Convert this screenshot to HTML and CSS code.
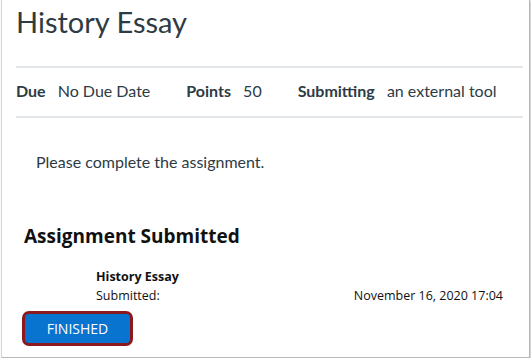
FILE: index.html
```html
<!DOCTYPE html>
<html>

<head>
  <title>History Essay</title>
  <link rel="stylesheet" href="styles.css">
</head>

<body>
  <div class="frame">
    <h1 class="title">History Essay</h1>
    <ul class="details">
      <li><b>Due</b> No Due Date</li>
      <li><b>Points</b> 50</li>
      <li><b>Submitting</b> an external tool</li>
    </ul>
    <p class="description">Please complete the assignment.</p>

    <div class="tool">
      <h2>Assignment Submitted</h2>
      <div class="submission">
        <div class="name">History Essay</div>
        <div class="row">
          <span>Submitted:</span>
          <span>November 16, 2020 17:04</span>
        </div>
      </div>
      <div class="finish">
        <button class="finish-button">FINISHED</button>
      </div>
    </div>
  </div>
</body>
</html>
```

FILE: styles.css
```css
html, body {
  margin: 0;
  padding: 0;
  background: #fff;
}

.frame {
  box-sizing: border-box;
  width: 529px;
  height: 358px;
  margin-left: 1px;
  border-left: 1px solid #d6d6d6;
  border-right: 1px solid #b8b8b8;
  border-bottom: 1px solid #b8b8b8;
  box-shadow: 1px 1px 2px rgba(0, 0, 0, 0.25);
  padding: 0 6px 0 14px;
  font-family: Lato, "Open Sans", sans-serif;
  color: #2d3b45;
  overflow: hidden;
}

.title {
  margin: 0;
  padding-top: 2px;
  font-size: 29px;
  font-weight: 400;
  line-height: 40px;
  height: 64px;
  border-bottom: 2px solid #e3e6e8;
}

.details {
  list-style: none;
  margin: 0;
  padding: 0;
  height: 48px;
  display: flex;
  align-items: center;
  gap: 36px;
  font-size: 16px;
  border-bottom: 2px solid #e3e6e8;
}

.details li {
  margin-top: -4px;
}

.details b {
  font-weight: 700;
  margin-right: 8px;
}

.description {
  margin: 34px 0 0 20px;
  font-size: 16px;
  line-height: 20px;
}

.tool {
  font-family: "Open Sans", "Noto Sans", sans-serif;
  color: #111;
}

.tool h2 {
  margin: 50px 0 0 8px;
  font-size: 19px;
  font-weight: 700;
  line-height: 28px;
}

.submission {
  margin: 17px 20px 0 80px;
  font-size: 12.5px;
  line-height: 19px;
}

.submission .name {
  font-weight: 700;
}

.row {
  display: flex;
  justify-content: space-between;
}

.finish {
  margin: 6px 0 0 6px;
}

.finish-button {
  width: 111px;
  height: 35px;
  border: 3px solid #8b1a1e;
  border-radius: 7px;
  background: #0874d0;
  box-shadow: inset 0 0 0 2px #0874d0;
  color: #fff;
  font-family: "Open Sans", sans-serif;
  font-size: 14px;
}
```
